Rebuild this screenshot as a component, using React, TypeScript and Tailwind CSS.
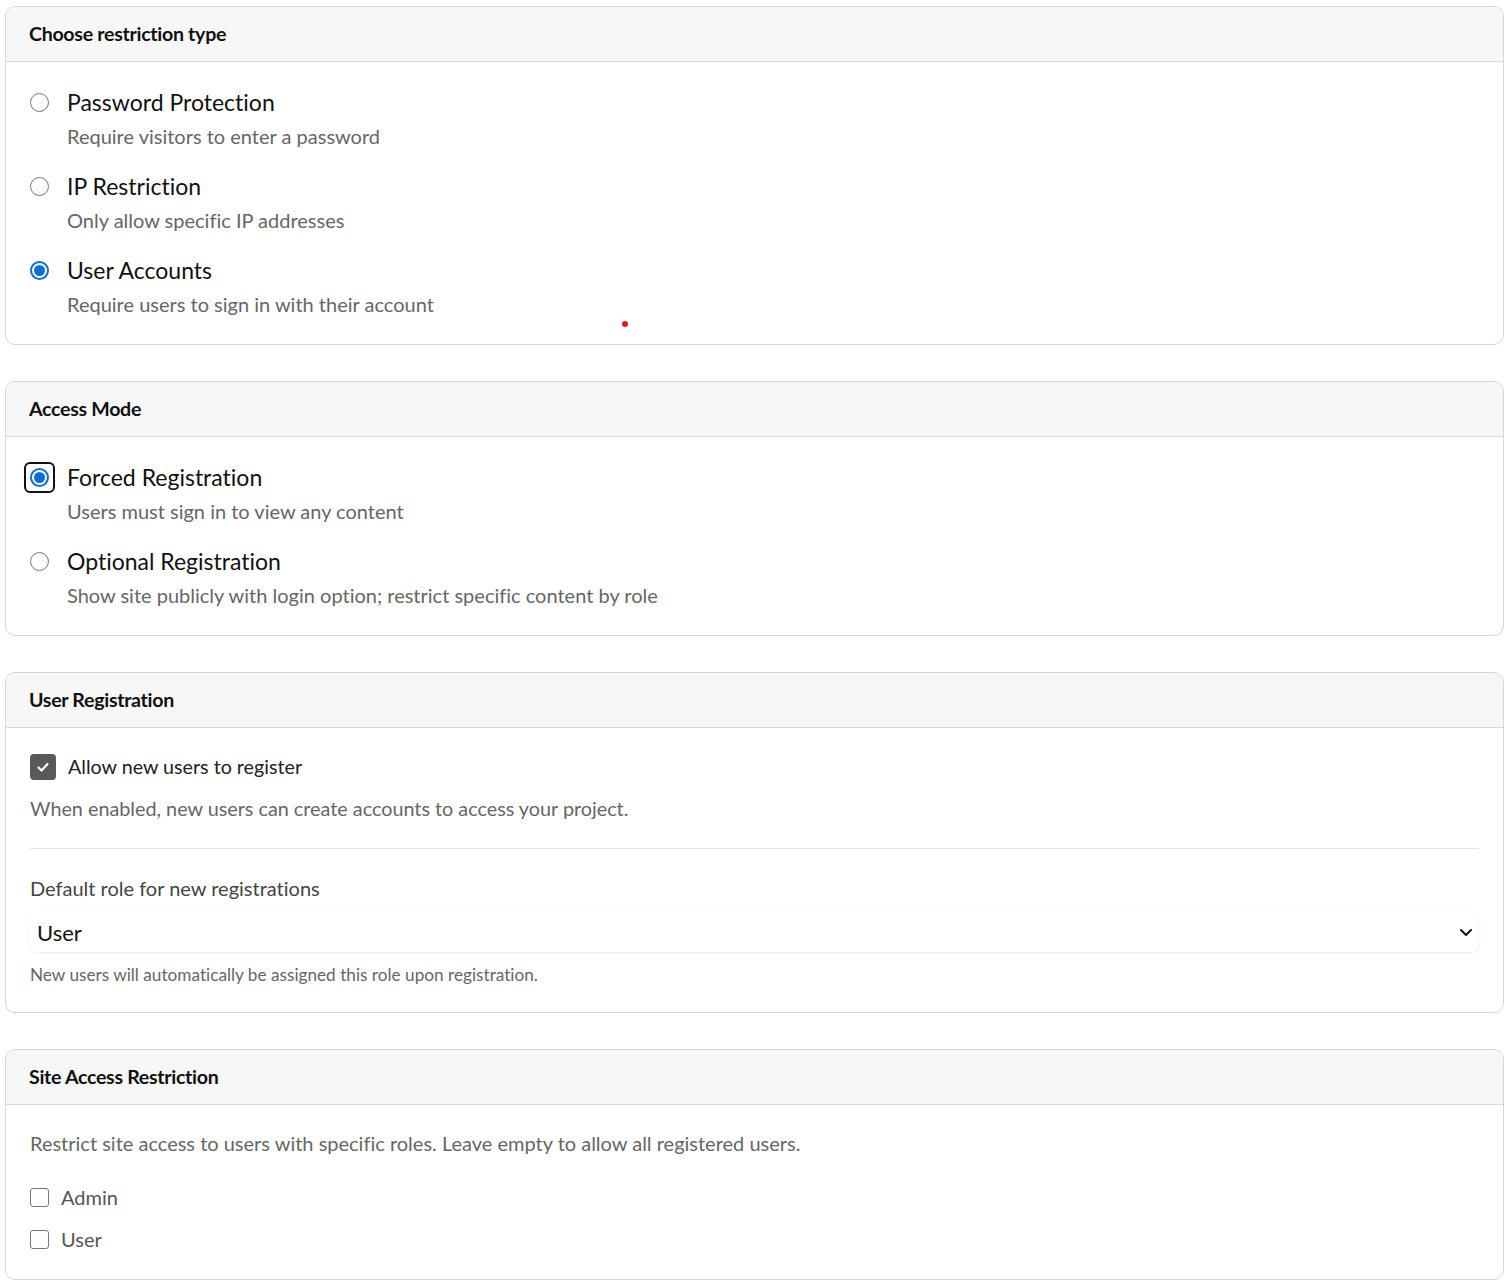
import type { ReactNode } from 'react';

const font = { fontFamily: 'Lato, "Noto Sans", sans-serif' };

function Card({ title, children }: { title: string; children: ReactNode }) {
  return (
    <div className="rounded-[10px] border border-[#d6d6d6] bg-white overflow-hidden">
      <div className="h-[55px] flex items-center px-[23px] bg-[#f7f7f7] border-b border-[#d9d9d9]">
        <span className="text-[19.6px] font-bold text-[#111] tracking-[-0.3px]">{title}</span>
      </div>
      {children}
    </div>
  );
}

function Radio({ checked, focused }: { checked?: boolean; focused?: boolean }) {
  const dot = checked ? (
    <span className="w-[19px] h-[19px] rounded-full border-2 border-[#0a6fd6] flex items-center justify-center">
      <span className="w-[11px] h-[11px] rounded-full bg-[#0a6fd6]" />
    </span>
  ) : (
    <span className="w-[19px] h-[19px] rounded-full border border-[#777]" />
  );
  if (focused) {
    return (
      <span className="w-[31px] h-[31px] -m-[6px] rounded-[6px] border-2 border-[#111] flex items-center justify-center bg-white">
        {dot}
      </span>
    );
  }
  return dot;
}

function RadioOption({ label, desc, checked, focused }: { label: string; desc: string; checked?: boolean; focused?: boolean }) {
  return (
    <div className="flex gap-[18px]">
      <div className="w-[19px] h-[34px] flex items-center justify-center shrink-0">
        <Radio checked={checked} focused={focused} />
      </div>
      <div className="flex flex-col">
        <span className="h-[34px] flex items-center text-[23px] text-[#111]">{label}</span>
        <span className="h-[34px] flex items-center text-[20px] text-[#666]">{desc}</span>
      </div>
    </div>
  );
}

function SmallCheck({ label }: { label: string }) {
  return (
    <div className="flex items-center gap-[12px] h-[42px]">
      <span className="w-[19px] h-[19px] rounded-[3px] border border-[#777] bg-white" />
      <span className="text-[20px] text-[#555]">{label}</span>
    </div>
  );
}

export default function App() {
  return (
    <div
      className="bg-white min-h-[1287px] pt-[6px] px-[5px] pb-[8px] relative [font-variant-ligatures:none]"
      style={font}
    >
      <div className="w-[1499px] flex flex-col gap-[36px]">
        <Card title="Choose restriction type">
          <div className="px-[24px] pt-[23px] pb-[23px] flex flex-col gap-[16px]">
            <RadioOption label="Password Protection" desc="Require visitors to enter a password" />
            <RadioOption label="IP Restriction" desc="Only allow specific IP addresses" />
            <RadioOption label="User Accounts" desc="Require users to sign in with their account" checked />
          </div>
        </Card>

        <Card title="Access Mode">
          <div className="px-[24px] pt-[23px] pb-[23px] flex flex-col gap-[16px]">
            <RadioOption label="Forced Registration" desc="Users must sign in to view any content" checked focused />
            <RadioOption label="Optional Registration" desc="Show site publicly with login option; restrict specific content by role" />
          </div>
        </Card>

        <Card title="User Registration">
          <div className="px-[24px] pt-[26px] pb-[26px]">
            <div className="flex items-center gap-[12px] h-[26px]">
              <span className="w-[26px] h-[26px] rounded-[4px] bg-[#595959] flex items-center justify-center">
                <svg width="16" height="16" viewBox="0 0 16 16" fill="none">
                  <path d="M3.5 8.5l3 3 6-6.5" stroke="#fff" strokeWidth="2.2" strokeLinecap="round" strokeLinejoin="round" />
                </svg>
              </span>
              <span className="text-[19.7px] text-[#222]">Allow new users to register</span>
            </div>
            <div className="mt-[15px] h-[28px] flex items-center text-[19.8px] text-[#666]">
              When enabled, new users can create accounts to access your project.
            </div>
            <div className="mt-[25px] border-t border-[#e4e4e4]" />
            <div className="mt-[25px] h-[28px] flex items-center text-[20px] text-[#444]">
              Default role for new registrations
            </div>
            <div className="mt-[10px] h-[40px] flex items-center justify-between px-[7px] rounded-[8px] bg-white shadow-[0_1px_3px_rgba(0,0,0,0.08)]">
              <span className="text-[22px] text-[#111]">User</span>
              <svg width="16" height="16" viewBox="0 0 16 16" fill="none" className="mr-[-2px]">
                <path d="M3 6l5 5 5-5" stroke="#111" strokeWidth="2" strokeLinecap="round" strokeLinejoin="round" />
              </svg>
            </div>
            <div className="mt-[12px] h-[22px] flex items-center text-[17.2px] text-[#666]">
              New users will automatically be assigned this role upon registration.
            </div>
          </div>
        </Card>

        <Card title="Site Access Restriction">
          <div className="px-[24px] pt-[22px] pb-[19px]">
            <div className="h-[32px] flex items-center text-[20px] text-[#666] mb-[17px]">
              Restrict site access to users with specific roles. Leave empty to allow all registered users.
            </div>
            <SmallCheck label="Admin" />
            <SmallCheck label="User" />
          </div>
        </Card>
      </div>
      <span className="absolute left-[622px] top-[321px] w-[6px] h-[6px] rounded-full bg-[#e01b1b]" />
    </div>
  );
}
